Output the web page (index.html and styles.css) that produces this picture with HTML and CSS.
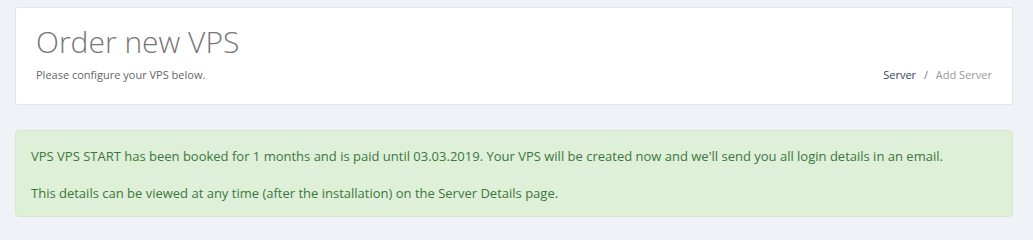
FILE: index.html
```html
<!DOCTYPE html>
<html lang="en">
<head>
  <meta charset="utf-8">
  <title>Order new VPS</title>
  <link rel="stylesheet" href="styles.css">
</head>
<body>

<div class="page">
  <div class="page-header">
    <div class="header-text">
      <h1>Order new VPS</h1>
      <p class="subtitle">Please configure your VPS below.</p>
    </div>
    <div class="breadcrumb">
      <a href="#">Server</a>
      <span class="sep">/</span>
      <span class="current">Add Server</span>
    </div>
  </div>

  <!-- booking result -->
  <div class="alert alert-success">
    <p>VPS VPS START has been booked for 1 months and is paid until 03.03.2019. Your VPS will be created now and we'll send you all login details in an email.</p>
    <p>This details can be viewed at any time (after the installation) on the Server Details page.</p>
  </div>
</div>

</body>
</html>
```

FILE: styles.css
```css
body {
  font-family: 'Open Sans', sans-serif;
  background-color: #f1f2f7;
  margin: 0;
  color: #555;
}
.page {
  padding: 7px 20px 20px 15px;
}
.page-header {
  background-color: #fff;
  border: 1px solid #e3e5ea;
  border-radius: 2px;
  padding: 0 20px;
  display: flex;
  justify-content: space-between;
  align-items: flex-end;
  box-sizing: border-box;
  height: 98px;
}
.header-text {
  padding-bottom: 21px;
}
h1 {
  font-weight: 300;
  font-size: 30px;
  color: #777;
  margin: 0 0 5px 0;
  line-height: 40px;
}
.subtitle {
  font-size: 11px;
  color: #666;
  margin: 0;
  line-height: 16px;
}
.breadcrumb {
  font-size: 11px;
  line-height: 16px;
  padding-bottom: 21px;
}
.breadcrumb a {
  color: #34495e;
  text-decoration: none;
}
.breadcrumb .sep {
  color: #777;
  margin: 0 5px;
}
.breadcrumb .current {
  color: #999;
}
.alert {
  margin-top: 25px;
  padding: 14px 15px 12px;
  border-radius: 4px;
  border: 1px solid #d6e9c6;
  font-size: 13px;
  line-height: 22px;
}
.alert-success {
  background-color: #dff0d8;
  color: #3c763d;
}
.alert p {
  margin: 0 0 13px 0;
}
.alert p + p {
  margin-top: 15px;
}
.alert p:last-child {
  margin-bottom: 0;
}
```
